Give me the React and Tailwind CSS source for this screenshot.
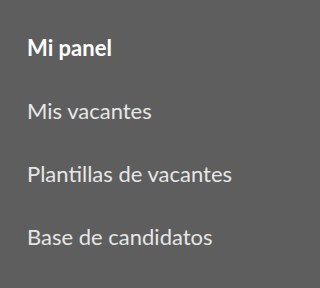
import React from 'react';

const items = [
  { label: 'Mi panel', active: true },
  { label: 'Mis vacantes' },
  { label: 'Plantillas de vacantes' },
  { label: 'Base de candidatos' },
];

const App = () => {
  return (
    <div className="w-full min-h-screen bg-[#5e5e5e] overflow-hidden" style={{ fontFamily: 'Lato, "Noto Sans", sans-serif' }}>
      <nav className="flex flex-col gap-[41px] pl-[27px] pt-[37px]">
        {items.map(item => (
          <a
            key={item.label}
            href="#"
            className={
              item.active
                ? 'block text-[22px] leading-[22px] font-bold text-white'
                : 'block text-[22px] leading-[22px] text-[#e6e6e6]'
            }
          >
            {item.label}
          </a>
        ))}
      </nav>
    </div>
  );
};

export default App;
